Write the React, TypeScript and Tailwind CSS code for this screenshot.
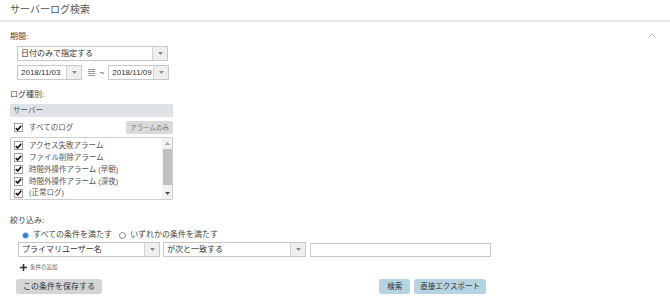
import React from 'react';

const font = { fontFamily: '"Liberation Sans", "Noto Sans CJK JP", sans-serif' };

const Arrow = () => (
    <span className="flex w-[15px] shrink-0 items-center justify-center border-l border-[#d2d2d2] bg-[#efefef]">
        <svg width="5" height="3" viewBox="0 0 5 3">
            <path d="M0 0h5L2.5 3z" fill="#8a8a8a" />
        </svg>
    </span>
);

const Select = ({ value, className }: { value: string; className: string }) => (
    <div className={`flex h-[15px] border border-[#c9c9c9] bg-white ${className}`}>
        <span className="flex-1 overflow-hidden whitespace-nowrap pl-[3px] text-[8px] leading-[13px] text-[#333]">{value}</span>
        <Arrow />
    </div>
);

const Check = () => (
    <span className="flex h-[9px] w-[9px] shrink-0 items-center justify-center border border-[#a0a0a0] bg-white">
        <svg width="7" height="6" viewBox="0 0 7 6">
            <path d="M0.8 3.2 2.7 5 6.2 0.8" fill="none" stroke="#111" strokeWidth="1.6" />
        </svg>
    </span>
);

const logItems = [
    'アクセス失敗アラーム',
    'ファイル削除アラーム',
    '時間外操作アラーム (早朝)',
    '時間外操作アラーム (深夜)',
    '(正常ログ)',
];

export default function App() {
    return (
        <div className="h-[307px] w-[670px] overflow-hidden bg-white text-[#444]" style={font}>
            <div className="h-[22px] border-b-2 border-[#e8e8e8] pl-[10px] pt-[3px]">
                <h1 className="text-[10px] leading-[14px] text-[#555]">サーバーログ検索</h1>
            </div>

            <div className="pl-[10px] pr-[14px]">
                <div className="mt-[10px] flex items-center justify-between">
                    <span className="text-[8px] leading-[10px]">期間:</span>
                    <svg width="8" height="5" viewBox="0 0 8 5" className="mt-[-3px]">
                        <path d="M0.5 4.5 4 1l3.5 3.5" fill="none" stroke="#b5b5b5" strokeWidth="1" />
                    </svg>
                </div>

                <div className="ml-[7px] mt-[4px] flex flex-col gap-[4px]">
                    <Select value="日付のみで指定する" className="w-[151px]" />
                    <div className="flex items-center">
                        <Select value="2018/11/03" className="w-[65px]" />
                        <span className="ml-[6px] flex h-[7px] w-[7px] flex-col justify-between">
                            <span className="h-[1px] bg-[#999]" />
                            <span className="h-[1px] bg-[#999]" />
                            <span className="h-[1px] bg-[#999]" />
                            <span className="h-[1px] bg-[#999]" />
                        </span>
                        <span className="ml-[4px] text-[9px] leading-[10px] text-[#666]">~</span>
                        <Select value="2018/11/09" className="ml-[4px] w-[61px]" />
                    </div>
                </div>

                <div className="mt-[10px] text-[8px] leading-[10px]">ログ種別:</div>

                <div className="mt-[4px] w-[163px]">
                    <div className="h-[13px] bg-[#dfe2e6] pl-[3px] text-[7.5px] leading-[13px] text-[#555]">サーバー</div>
                    <div className="mt-[4px] flex h-[13px] items-center justify-between">
                        <div className="flex items-center gap-[6px] pl-[4px]">
                            <Check />
                            <span className="text-[7.5px] text-[#555]">すべてのログ</span>
                        </div>
                        <span className="rounded-[2px] bg-[#dadada] px-[4px] text-[6.5px] leading-[13px] text-[#777]">
                            アラームのみ
                        </span>
                    </div>
                    <div className="mt-[3px] flex h-[63px] border border-[#cfcfcf] bg-white">
                        <div className="flex flex-1 flex-col pt-[2px]">
                            {logItems.map((item) => (
                                <div key={item} className="flex h-[12px] items-center gap-[6px] pl-[3px]">
                                    <Check />
                                    <span className="text-[7.5px] text-[#555]">{item}</span>
                                </div>
                            ))}
                        </div>
                        <div className="flex w-[10px] flex-col items-center bg-[#f1f1f1]">
                            <svg width="5" height="3" viewBox="0 0 5 3" className="mt-[4px]">
                                <path d="M0 3h5L2.5 0z" fill="#a3a3a3" />
                            </svg>
                            <span className="mt-[4px] h-[36px] w-[9px] bg-[#c1c1c1]" />
                            <svg width="5" height="3" viewBox="0 0 5 3" className="mt-auto mb-[4px]">
                                <path d="M0 0h5L2.5 3z" fill="#505050" />
                            </svg>
                        </div>
                    </div>
                </div>

                <div className="mt-[16px] text-[8px] leading-[10px]">絞り込み:</div>

                <div className="ml-[12px] mt-[4px] flex h-[10px] items-center text-[8px] text-[#444]">
                    <span className="flex h-[7px] w-[7px] items-center justify-center rounded-full border border-[#9cc3ea] bg-white">
                        <span className="h-[5px] w-[5px] rounded-full bg-[#2f7fd6]" />
                    </span>
                    <span className="ml-[4px]">すべての条件を満たす</span>
                    <span className="ml-[7px] h-[7px] w-[7px] rounded-full border border-[#888] bg-white" />
                    <span className="ml-[4px]">いずれかの条件を満たす</span>
                </div>

                <div className="ml-[8px] mt-[2px] flex items-center">
                    <Select value="プライマリユーザー名" className="w-[142px]" />
                    <Select value="が次と一致する" className="ml-[3px] w-[143px]" />
                    <div className="ml-[4px] h-[14px] w-[181px] border border-[#c9c9c9] bg-white" />
                </div>

                <div className="ml-[10px] mt-[5px] flex h-[10px] items-center gap-[3px]">
                    <svg width="7" height="7" viewBox="0 0 7 7">
                        <path d="M3.5 0v7M0 3.5h7" stroke="#333" strokeWidth="1.6" />
                    </svg>
                    <span className="text-[5.5px] text-[#666]">条件の追加</span>
                </div>

                <div className="ml-[6px] mt-[7px] flex w-[470px] items-center justify-between">
                    <button className="h-[15px] rounded-[3px] bg-[#d5d5d5] px-[7px] text-[8px] leading-[15px] text-[#333]">
                        この条件を保存する
                    </button>
                    <div className="flex gap-[4px]">
                        <button className="h-[15px] rounded-[3px] bg-[#b6d3e1] px-[8px] text-[7.5px] leading-[15px] text-[#333]">
                            検索
                        </button>
                        <button className="h-[15px] rounded-[3px] bg-[#b6d3e1] px-[6px] text-[7.5px] leading-[15px] text-[#333]">
                            直接エクスポート
                        </button>
                    </div>
                </div>
            </div>
        </div>
    );
}
